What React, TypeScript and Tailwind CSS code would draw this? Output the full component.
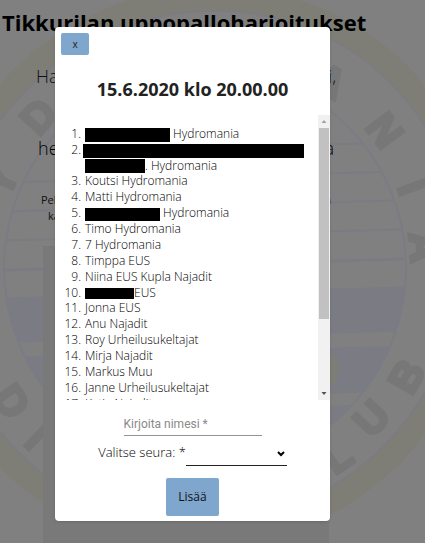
import React from "react";

type Glyph = { ch: string; x: number; y: number; turn: number };

const glyphs: Glyph[] = [
  { ch: "Y", x: 0, y: 180, turn: -66 },
  { ch: "D", x: 38, y: 116, turn: -48 },
  { ch: "A", x: 330, y: 80, turn: 30 },
  { ch: "N", x: 385, y: 130, turn: 53 },
  { ch: "I", x: 413, y: 187, turn: 70 },
  { ch: "A", x: 425, y: 247, turn: 85 },
  { ch: "D", x: 12, y: 401, turn: 55 },
  { ch: "I", x: 37, y: 437, turn: 44 },
  { ch: "L", x: 337, y: 456, turn: -35 },
  { ch: "U", x: 371, y: 418, turn: -46 },
  { ch: "B", x: 406, y: 376, turn: -60 },
];

function ClubEmblem() {
  return (
    <svg className="absolute inset-0 h-full w-full" viewBox="0 0 425 543" preserveAspectRatio="xMidYMin slice" aria-hidden="true">
      <ellipse cx="205" cy="268" rx="274" ry="264" transform="rotate(-45 205 268)" fill="none" stroke="#7e7e76" strokeWidth="24" />
      <ellipse cx="205" cy="268" rx="262" ry="252" transform="rotate(-45 205 268)" fill="#808080" stroke="#7b7b85" strokeWidth="1.5" />
      <clipPath id="inner">
        <circle cx="205" cy="268" r="201" />
      </clipPath>
      <g clipPath="url(#inner)">
        <g transform="rotate(-1.6 205 268)" fill="#7b7b83">
          <rect x="-20" y="147" width="450" height="2" />
          <rect x="-20" y="176" width="450" height="2" />
          <rect x="-20" y="205" width="450" height="2" />
          <rect x="-20" y="234" width="450" height="2" />
          <rect x="-20" y="263" width="450" height="3" />
          <rect x="-20" y="292" width="450" height="45" />
          <rect x="-20" y="351" width="450" height="46" />
          <rect x="-20" y="409" width="450" height="70" />
        </g>
        <ellipse cx="328" cy="369" rx="10" ry="17" fill="#7e7e76" />
      </g>
      <circle cx="205" cy="268" r="201" fill="none" stroke="#7b7b85" strokeWidth="2" />
      <g fill="#777777" stroke="#777777" strokeWidth="3" fontFamily="Liberation Sans, sans-serif" fontWeight="700" fontSize="42" textAnchor="middle">
        {glyphs.map((g, i) => (
          <text key={i} transform={`translate(${g.x} ${g.y}) rotate(${g.turn})`} dy="15">
            {g.ch}
          </text>
        ))}
      </g>
    </svg>
  );
}

function Bar({ className }: { className: string }) {
  return <span className={`inline-block bg-black align-middle ${className}`} />;
}

type Person = { hidden?: boolean; label: React.ReactNode };

const people: Person[] = [
  { hidden: true, label: <><Bar className="h-[14px] w-[85px]" /> Hydromania</> },
  { hidden: true, label: <><Bar className="-ml-[2px] h-[14px] w-[221px]" /><Bar className="h-[14px] w-[60px]" />. Hydromania</> },
  { label: "Koutsi Hydromania" },
  { label: "Matti Hydromania" },
  { hidden: true, label: <><Bar className="h-[13px] w-[75px]" /> Hydromania</> },
  { label: "Timo Hydromania" },
  { label: "7 Hydromania" },
  { label: "Timppa EUS" },
  { label: "Niina EUS Kupla Najadit" },
  { hidden: true, label: <><Bar className="h-[11px] w-[49px]" />EUS</> },
  { label: "Jonna EUS" },
  { label: "Anu Najadit" },
  { label: "Roy Urheilusukeltajat" },
  { label: "Mirja Najadit" },
  { label: "Markus Muu" },
  { label: "Janne Urheilusukeltajat" },
  { label: "Katja Najadit" },
];

function ScrollBar() {
  return (
    <div className="flex w-3 shrink-0 flex-col items-center bg-[#f1f1f1]" aria-hidden="true">
      <svg className="h-[13px] w-3" viewBox="0 0 12 13"><path d="M6 5 8.5 8h-5z" fill="#a3a3a3" /></svg>
      <div className="h-[191px] w-[10px] bg-[#c1c1c1]" />
      <svg className="mt-auto h-[13px] w-3" viewBox="0 0 12 13"><path d="M6 8 8.5 5h-5z" fill="#505050" /></svg>
    </div>
  );
}

export default function App() {
  return (
    <div className="relative min-h-screen overflow-hidden bg-[#808080] font-['Open_Sans',sans-serif] text-black">
      <ClubEmblem />
      <main className="relative h-screen">
        <h1 className="pt-[6px] pl-[2px] text-[22px] leading-8 font-bold whitespace-nowrap">Tikkurilan uppopalloharjoitukset</h1>
        <div className="flex justify-between pt-[22px] pr-[89px] pl-[36px] text-lg leading-8 font-light text-[#111]"><span>Ha</span><span>i,</span></div>
        <div className="flex justify-between pt-10 pr-[91px] pl-[38px] text-lg leading-8 font-light text-black"><span>he</span><span>a</span></div>
        <div className="flex justify-between pt-7 pr-[94px] pl-[41px] text-[11px] leading-4 text-[#111]"><span>Pel</span><span>n</span></div>
        <div className="pl-[48px] text-[11px] leading-4 text-[#111]">ka</div>
        <div className="mt-[22px] mr-24 ml-[43px] h-full bg-[#797979]" />
      </main>

      <div className="absolute inset-x-0 top-[27px] pr-[95px] pl-[55px]">
        <section role="dialog" aria-labelledby="event" className="rounded-[4px] bg-white pb-[5px] text-[#222] shadow">
          <div className="px-[6px] pt-[6px]">
            <button type="button" className="block h-[22px] w-7 rounded-[2px] bg-[#7fa6cd] text-[10px] leading-5 text-[#222]">x</button>
          </div>
          <h2 id="event" className="pt-[18px] text-center text-lg leading-8 font-bold">15.6.2020 klo 20.00.00</h2>
          <div className="mt-[10px] flex h-[285px]">
            <ol className="min-w-0 flex-1 overflow-hidden pt-[11px] text-xs font-light text-black">
              {people.map((p, i) => (
                <li key={i} className={`flex gap-1 ${p.hidden ? "leading-[15px]" : "leading-4"}`}>
                  <span className="w-[26px] shrink-0 text-right">{i + 1}.</span>
                  <span className="min-w-0 flex-1">{p.label}</span>
                </li>
              ))}
            </ol>
            <ScrollBar />
          </div>
          <form className="flex flex-col items-center pt-3">
            <input aria-label="Kirjoita nimesi" placeholder="Kirjoita nimesi *" className="h-6 w-[138px] border-b border-[#949494] font-[Roboto,sans-serif] text-xs placeholder:text-[#8a8a8a]" />
            <div className="mt-[6px] flex">
              <label htmlFor="club" className="text-[13px] leading-5 font-light text-black">Valitse seura: *</label>
              <div className="relative h-6">
                <select id="club" defaultValue="" className="block h-6 w-[101px] appearance-none border-b border-[#222] bg-transparent text-xs">
                  <option value=""></option>
                </select>
                <svg className="pointer-events-none absolute top-2 right-[2px] h-2 w-2" viewBox="0 0 8 8"><path d="M1 2l3 3 3-3" fill="none" stroke="#000" strokeWidth="2" /></svg>
              </div>
            </div>
            <button type="button" className="mt-3 h-[38px] w-[53px] rounded-[2px] bg-[#7fa6cd] text-xs text-[#111]">Lisää</button>
          </form>
        </section>
      </div>
    </div>
  );
}
